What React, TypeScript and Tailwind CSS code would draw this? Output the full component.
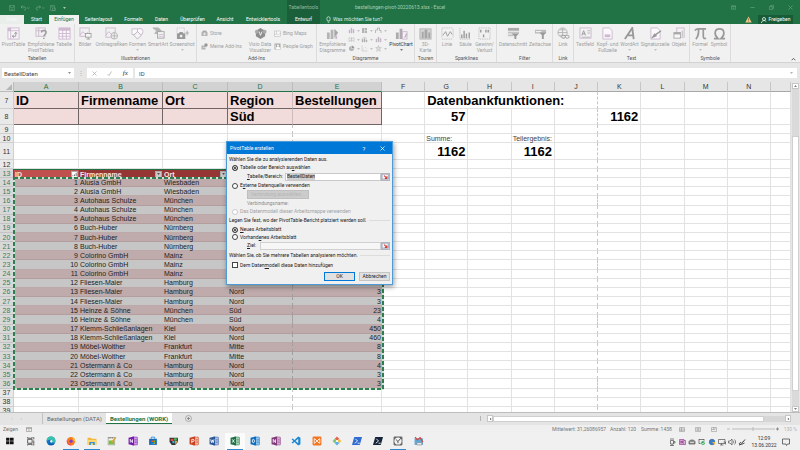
import React from 'react';

type Kids = { children?: React.ReactNode };

const G = '#b4b4b4';
const P = '#cdb9d0';

function Ico({ children, className = 'h-[13px] w-[13px]' }: Kids & { className?: string }) {
  return (
    <svg viewBox="0 0 14 14" className={`shrink-0 ${className}`} fill="none" stroke={G} strokeWidth="1" aria-hidden="true">
      {children}
    </svg>
  );
}

/* ---------- ribbon drawings ---------- */
const icons = {
  pivot: <><rect x="1" y="1" width="12" height="12" stroke={P} fill="#f8f5f8" /><path d="M1 4h12M4 1v12" stroke={P} /><rect x="1" y="1" width="3" height="3" fill={P} stroke="none" /><path d="M6 10h3.5V6M8 7.500L9.500 5.500L11 7.500M7.500 8.500L5.500 10L7.500 11.500" stroke="#9a9a9a" /></>,
  recommend: <><rect x="1" y="1" width="10" height="9" stroke={P} /><path d="M1 4h10M4 1v9" stroke={P} /><path d="M7 6c0-3 5-3 5 0c0 2-2.500 2-2.500 4M9.500 11.500v1.500" stroke="#999" strokeWidth="1.500" /></>,
  table: <><rect x="1" y="1" width="12" height="12" stroke={P} fill="#faf8fa" /><rect x="1" y="1" width="12" height="3" fill={P} stroke="none" /><path d="M1 7h12M1 10h12M5 1v12M9 1v12" stroke={P} /></>,
  picture: <><rect x="1" y="1" width="10" height="9" stroke={P} /><path d="M1 9l3-4l3 3l2-2l2 3" stroke={P} /><rect x="7" y="7" width="6" height="4" fill="#f5f5f5" stroke="#a3a3a3" /><path d="M10 11v2M8 13h4" stroke="#a3a3a3" /></>,
  online: <><rect x="1" y="1" width="10" height="10" stroke={P} /><path d="M1 9l3-4l3 3l4-3" stroke={P} /><circle cx="10" cy="9.500" r="3.500" fill="#f1f1f1" /><path d="M6.500 9.500h7M10 6v7" /></>,
  shapes: <><circle cx="9.500" cy="5" r="3.500" stroke={P} fill="#faf8fa" /><path d="M1 2h6v6H1z" stroke={P} fill="#faf8fa" /><path d="M3 9l4-4l4 4l-4 4z" fill="#f5f5f5" stroke="#b8b0ba" /></>,
  smart: <><path d="M1 1h6l3 3l-3 3H3l2-3z" fill={G} /><rect x="6" y="5" width="7" height="7" fill="#f7f7f7" stroke="#a3a3a3" /><path d="M7 8h5M7 10h5" stroke={P} /></>,
  shot: <><rect x="1" y="1" width="8" height="6" strokeDasharray="1 1" stroke={P} /><path d="M1 7h2l1-1.500h3L8 7h2v6H1z" fill="#999" stroke="none" /><circle cx="5.500" cy="9.800" r="1.500" fill="#eee" stroke="none" /><path d="M12 4v5M10 6.500h4" stroke="#aaa" /></>,
  bag: <><path d="M1 4l6-2l6 2v8H1z" fill={G} stroke="none" /><path d="M4 4V2h6v2" stroke="#999" strokeWidth="1.500" /><path d="M7 5v6M4 8h6" stroke="#eee" strokeWidth="1.500" /></>,
  addins: <><rect x="1" y="5" width="8" height="8" fill={G} stroke="none" /><circle cx="10" cy="4" r="3.500" fill="#999" stroke="none" /><path d="M4 9h5" stroke="#eee" /></>,
  visio: <><path d="M2 4l5-3l5 3v6l-5 3l-5-3z" fill="#8e8e8e" stroke="none" /><circle cx="3" cy="5" r="2" fill="#aaa" stroke="none" /><circle cx="11.500" cy="5" r="2" fill="#aaa" stroke="none" /><path d="M5.500 5l1.500 4l1.500-4" stroke="#f1f1f1" /></>,
  map: <><rect x="1" y="2" width="12" height="11" fill="#f8f8f8" /><path d="M5 2v6l3 2l5-4M1 9l4-1" /></>,
  people: <><rect x="1" y="1" width="12" height="12" fill="#aaa" stroke="none" /><circle cx="8" cy="5" r="2" fill="#fff" stroke="none" /><path d="M4 12c0-6 8-6 8 0zM3 3v8" fill="#fff" stroke="#fff" /></>,
  chartRec: <><path d="M1 6h3v7H1zM5 3h3v10H5z" fill={G} stroke="none" /><path d="M9 2l4 4l-4 6z" fill="#a5a5a5" stroke="none" /><path d="M10 9h2v4h-2z" fill={P} stroke="none" /></>,
  bars: <path d="M2 6h2v6H2zM6 2h2v10H6zM10 5h2v7h-2z" fill={G} stroke={P} />,
  tree: <><rect x="2" y="2" width="10" height="10" fill={G} stroke="none" /><path d="M7 2v10M7 7h5" stroke="#f1f1f1" /></>,
  flow: <path d="M1 12V6h4V2h4v5h3v5" stroke="#a8a8a8" strokeWidth="1.500" />,
  radar: <path d="M2 3l5 3l5-3v8l-5-3l-5 3zM7 2v10" />,
  combo: <><path d="M2 7h2v5H2zM6 5h2v7H6zM10 8h2v4h-2z" fill="#a8a8a8" /><path d="M1 6l5-4l6 3" /></>,
  pie: <><circle cx="7" cy="7" r="5" fill={G} stroke="none" /><path d="M7 7V1a6 6 0 0 1 6 6z" fill="#8f8f8f" stroke="#f1f1f1" /></>,
  scatter: <><path d="M2 1v11h11" /><path d="M5 8h1M8 5h1M10 8h1" stroke={P} strokeWidth="2" /></>,
  star: <path d="M7 1l1.500 4h4l-3 3l1 5L7 10l-3.500 3l1-5l-3-3h4z" fill="#ddd" />,
  pivotChart: <><path d="M1 6h3v7H1zM5 2h3v11H5z" fill="#ababab" stroke="none" /><rect x="8" y="5" width="5" height="8" fill="#f5f0f5" stroke={P} /><path d="M10 11c2 0 2-2 2-4" stroke="#999" /></>,
  map3d: <><rect x="1" y="2" width="12" height="11" fill="#d4d4d4" stroke={G} /><path d="M3 5h2v7H3zM6 3h3v9H6zM10 6h2v6h-2z" fill="#a6a6a6" stroke="none" /></>,
  line: <><path d="M1 1h12M1 13h12M1 2v10M13 2v10" strokeDasharray="1 1" /><path d="M2 9l3-4l2 5l3-5l2 3" stroke="#999" /></>,
  column: <><path d="M1 1v12h12" strokeDasharray="1 1" /><path d="M3 12V8M5.500 12V4M8 12V7M11 12V6" stroke="#9c9c9c" strokeWidth="1.500" /></>,
  winloss: <><path d="M1 1h12v12H1z" strokeDasharray="1 1" /><path d="M3 3v3M6 8v3M8.500 3v3M11 3v3" stroke="#999" strokeWidth="1.500" /></>,
  slicer: <><path d="M1 1h12v3H1z" fill="#aaa" stroke="none" /><path d="M1 6h12M1 9h6" strokeWidth="2" stroke="#c4c4c4" /><path d="M5 7h8l-3 3v3H8v-3z" fill="#999" stroke="none" /></>,
  timeline: <><path d="M1 3h12v4H1z" fill="#bbb" stroke="none" /><path d="M2 5h6" stroke="#fff" /><path d="M6 6h7l-2.500 3v4h-2V9z" fill="#999" stroke="none" /></>,
  link: <><circle cx="6" cy="6" r="5" /><path d="M1 6h10M6 1v10M2.500 3h7M2.500 9h7" /><rect x="5" y="9" width="4" height="3" rx="1.500" fill="#f1f1f1" stroke="#999" /><rect x="9" y="9" width="4" height="3" rx="1.500" fill="#f1f1f1" stroke="#999" /></>,
  textbox: <><rect x="1" y="1" width="12" height="11" stroke={P} /><path d="M3 9l2-5l2 5M3.500 7.500h3" stroke="#999" /><path d="M9 4h3M9 6.500h3M3 11h9" /></>,
  headfoot: <><path d="M2 1h7l3 3v9H2z" stroke={P} fill="#faf8fa" /><rect x="4" y="8" width="6" height="3" fill={P} stroke="none" /></>,
  wordart: <path d="M2 13L10 1l1.500 12M5 9h6" stroke="#999" strokeWidth="2" />,
  sign: <><path d="M2 1h7l3 3v9H2z" stroke={P} fill="#faf8fa" /><path d="M6 9l7-5M4 11l2-3l1.500 1.500z" stroke="#999" strokeWidth="1.500" /></>,
  object: <><rect x="4" y="1" width="8" height="10" stroke={P} /><rect x="1" y="6" width="7" height="6" fill="#f8f8f8" stroke="#aaa" /><path d="M1 7h7" strokeWidth="2" stroke="#aaa" /><path d="M10 4v6" /></>,
  pi: <path d="M1 4c1-2 2-2 4-2h8M5 2c0 5 0 8-3 11M10 2v8c0 2 1 3 3 2" stroke="#999" strokeWidth="1.800" />,
  omega: <path d="M1 12.500h4.500C1 9 1 2 7 2s6 7 1.500 10.500H13" stroke="#999" strokeWidth="1.800" />,
};

function Big({ icon, lines, w, caret, dark }: { icon: React.ReactNode; lines: string[]; w: string; caret?: boolean; dark?: boolean }) {
  return (
    <button type="button" className={`flex shrink-0 flex-col items-center ${w}`}>
      <Ico>{icon}</Ico>
      <span className={`mt-px flex flex-col items-center whitespace-nowrap text-[5px] leading-[6px] ${dark ? 'text-[#333]' : 'text-[#a0a0a0]'}`}>
        {lines.map((l) => <span key={l}>{l}</span>)}
      </span>
      {caret && <Caret className={`mt-[2px] ${dark ? 'text-[#555]' : 'text-[#b5b5b5]'}`} />}
    </button>
  );
}

function Caret({ className = '' }: { className?: string }) {
  return (
    <svg viewBox="0 0 4 2" className={`h-[2px] w-[3px] shrink-0 ${className}`} aria-hidden="true">
      <path d="M0 0h4L2 2z" fill="currentColor" />
    </svg>
  );
}

function Small({ icon, label }: { icon: React.ReactNode; label: string }) {
  return (
    <button type="button" className="flex h-[13px] items-center gap-[2px] whitespace-nowrap text-[5px] text-[#a0a0a0]">
      <Ico className="h-[7px] w-[7px]">{icon}</Ico>
      {label}
    </button>
  );
}

function Group({ label, w, children }: Kids & { label: string; w: string }) {
  return (
    <section aria-label={label} className={`flex h-full shrink-0 flex-col border-r border-[#dcdcdc] ${w}`}>
      <div className="flex flex-1 pt-[3px]">{children}</div>
      <div className="h-[7px] whitespace-nowrap text-center text-[5px] leading-[7px] text-[#555]">{label}</div>
    </section>
  );
}

function TitleBar() {
  return (
    <div className="flex h-[15px] items-center">
      <div className="flex w-[287px] items-center gap-[5px] pl-[9px] text-[#6ba583]">
        <svg viewBox="0 0 12 12" className="h-[6px] w-[6px]" fill="none" stroke="currentColor"><path d="M1 1h10v10H1zM3 1v4h6V1M4 11V8h4v3" /></svg>
        <svg viewBox="0 0 18 12" className="h-[6px] w-[10px]" fill="none" stroke="currentColor" strokeWidth="1.500"><path d="M4 1L1 4l3 3M1 4h6c5 0 5 6 0 6M14 5l1.500 2L17 5" /></svg>
        <svg viewBox="0 0 18 12" className="h-[6px] w-[10px]" fill="none" stroke="currentColor" strokeWidth="1.500"><path d="M7 1l3 3l-3 3M10 4H5c-5 0-5 6 0 6M14 5l1.500 2L17 5" /></svg>
        <svg viewBox="0 0 12 12" className="h-[6px] w-[6px]" fill="none" stroke="currentColor"><path d="M1 1h8v10H1zM3 1v3h4M5 6h6v5H5z" /></svg>
        <Caret className="ml-[2px] text-[#d5e6db]" />
      </div>
      <div className="h-full w-[33px] bg-[#1b5e3a] text-center text-[5px] leading-[15px] text-[#8fbba0]">Tabellentools</div>
      <div className="flex-1 pl-[35px] text-[5px] text-[#a5cdb4]">bestellungen-pivot-20220613.xlsx - Excel</div>
      <div className="flex text-[#6ba583]">
        {['M1 2h10v8H1zM1 4h10M6 9V6', 'M1 6h10', 'M1 4h7v7H1zM4 4V1h7v7H8', 'M1 1l10 10M11 1L1 11'].map((d, i) => (
          <button key={d} type="button" aria-label={['Menüband', 'Minimieren', 'Wiederherstellen', 'Schließen'][i]} className="flex w-[19px] justify-center">
            <svg viewBox="0 0 12 12" className="h-[5px] w-[5px]" fill="none" stroke="currentColor" strokeWidth="1.500"><path d={d} /></svg>
          </button>
        ))}
      </div>
    </div>
  );
}

function RibbonTabs() {
  const tabs: [string, string][] = [
    ['Datei', 'w-[24px] bg-[#e9eeeb] text-[#f8f8f8]'], ['Start', 'w-[25px]'], ['Einfügen', 'w-[30px] bg-[#f1f1f1] text-[#217346]'],
    ['Seitenlayout', 'w-[39px]'], ['Formeln', 'w-[31px]'], ['Daten', 'w-[25px]'], ['Überprüfen', 'w-[37px]'],
    ['Ansicht', 'w-[28px]'], ['Entwicklertools', 'w-[48px]'], ['Entwurf', 'w-[33px] bg-[#1b5e3a]'],
  ];
  return (
    <nav className="flex h-[9px] items-stretch text-[5px] leading-[9px] text-white">
      {tabs.map(([t, c]) => <button key={t} type="button" className={`shrink-0 text-center ${c}`}>{t}</button>)}
      <button type="button" className="ml-[6px] flex items-center gap-[2px] whitespace-nowrap text-[#d8ebe0]">
        <svg viewBox="0 0 10 14" className="h-[7px] w-[5px]" fill="none" stroke="currentColor" strokeWidth="1.500"><path d="M3 10C1 6 1 1.500 5 1.500S9 6 7 10zM3.500 12.500h3" /></svg>
        Was möchten Sie tun?
      </button>
      <div className="flex-1" />
      <svg viewBox="0 0 12 12" className="mr-[6px] h-[7px] w-[7px] self-center"><path d="M6 1l5.500 10H.5z" fill="#f4c58a" /><path d="M6 4v4M6 9v1" stroke="#7a4a10" /></svg>
      <button type="button" className="mr-[7px] flex w-[35px] items-center justify-center gap-[2px] bg-[#185c37] text-white">
        <svg viewBox="0 0 12 12" className="h-[6px] w-[6px]" fill="none" stroke="currentColor" strokeWidth="1.500"><circle cx="6" cy="4" r="3" /><path d="M1 12c0-6 8-6 9-3" /></svg>
        Freigeben
      </button>
    </nav>
  );
}

function Ribbon() {
  const mini = [icons.bars, icons.tree, icons.flow, icons.radar, icons.combo, icons.bars, icons.pie, icons.scatter, icons.star];
  return (
    <div className="flex h-[39px] shrink-0 border-b border-[#d2d2d2] bg-[#f1f1f1]">
      <Group label="Tabellen" w="w-[75px]">
        <Big icon={icons.pivot} lines={['PivotTable']} w="w-[27px]" />
        <Big icon={icons.recommend} lines={['Empfohlene', 'PivotTables']} w="w-[28px]" />
        <Big icon={icons.table} lines={['Tabelle']} w="w-[18px]" />
      </Group>
      <Group label="Illustrationen" w="w-[122px]">
        <Big icon={icons.picture} lines={['Bilder']} w="w-[20px]" />
        <Big icon={icons.online} lines={['Onlinegrafiken']} w="w-[33px]" />
        <Big icon={icons.shapes} lines={['Formen']} w="w-[19px]" caret />
        <Big icon={icons.smart} lines={['SmartArt']} w="w-[22px]" />
        <Big icon={icons.shot} lines={['Screenshot']} w="w-[26px]" caret />
      </Group>
      <Group label="Add-Ins" w="w-[120px]">
        <div className="w-[49px] pl-[4px]">
          <Small icon={icons.bag} label="Store" />
          <Small icon={icons.addins} label="Meine Add-Ins" />
        </div>
        <Big icon={icons.visio} lines={['Visio Data', 'Visualizer']} w="w-[28px]" />
        <div className="w-[42px]">
          <Small icon={icons.map} label="Bing Maps" />
          <Small icon={icons.people} label="People Graph" />
        </div>
      </Group>
      <Group label="Diagramme" w="w-[98px]">
        <Big icon={icons.chartRec} lines={['Empfohlene', 'Diagramme']} w="w-[31px]" />
        <div className="grid w-[40px] grid-cols-3 content-start gap-y-[2px]">
          {mini.map((m, i) => (
            <button key={i} type="button" aria-label={`Diagrammtyp ${i + 1}`} className="flex h-[7px] items-center gap-[2px]">
              <Ico className="h-[7px] w-[7px]">{m}</Ico>
              <Caret className="text-[#b5b5b5]" />
            </button>
          ))}
        </div>
        <Big icon={icons.pivotChart} lines={['PivotChart']} w="w-[26px]" caret dark />
      </Group>
      <Group label="Touren" w="w-[22px]">
        <Big icon={icons.map3d} lines={['3D-', 'Karte']} w="w-[21px]" />
      </Group>
      <Group label="Sparklines" w="w-[60px]">
        <Big icon={icons.line} lines={['Linie']} w="w-[20px]" />
        <Big icon={icons.column} lines={['Säule']} w="w-[17px]" />
        <Big icon={icons.winloss} lines={['Gewinn/', 'Verlust']} w="w-[21px]" />
      </Group>
      <Group label="Filter" w="w-[56px]">
        <Big icon={icons.slicer} lines={['Datenschnitt']} w="w-[32px]" />
        <Big icon={icons.timeline} lines={['Zeitachse']} w="w-[22px]" />
      </Group>
      <Group label="Link" w="w-[21px]">
        <Big icon={icons.link} lines={['Link']} w="w-[20px]" />
      </Group>
      <Group label="Text" w="w-[116px]">
        <Big icon={icons.textbox} lines={['Textfeld']} w="w-[22px]" />
        <Big icon={icons.headfoot} lines={['Kopf- und', 'Fußzeile']} w="w-[23px]" />
        <Big icon={icons.wordart} lines={['WordArt']} w="w-[21px]" caret />
        <Big icon={icons.sign} lines={['Signaturzeile']} w="w-[30px]" caret />
        <Big icon={icons.object} lines={['Objekt']} w="w-[18px]" />
      </Group>
      <Group label="Symbole" w="w-[41px]">
        <Big icon={icons.pi} lines={['Formel']} w="w-[20px]" caret />
        <Big icon={icons.omega} lines={['Symbol']} w="w-[18px]" />
      </Group>
      <div className="flex flex-1 items-end justify-end pb-[1px] pr-[4px]">
        <button type="button" aria-label="Menüband reduzieren">
          <svg viewBox="0 0 8 6" className="h-[4px] w-[5px]" fill="none" stroke="#555" strokeWidth="1.500"><path d="M1 5l3-3l3 3" /></svg>
        </button>
      </div>
    </div>
  );
}

function FormulaBar() {
  return (
    <div className="flex h-[19px] shrink-0 items-start bg-[#e6e6e6] pl-[2px] pr-[3px] pt-[5px] text-[6px] text-[#444]">
      <div className="flex h-[10px] w-[72px] items-center bg-white pl-[2px] pr-[3px]">
        <input aria-label="Namenfeld" defaultValue="BestellDaten" className="w-full min-w-0 bg-transparent outline-none" />
        <Caret className="text-[#666]" />
      </div>
      <span className="w-[13px] text-center leading-[10px] text-[#aaa]">⋮</span>
      <div className="flex h-[10px] w-[46px] items-center justify-around bg-white">
        <svg viewBox="0 0 10 10" className="h-[5px] w-[5px]" stroke="#aaa" strokeWidth="1.500"><path d="M1 1l8 8M9 1L1 9" /></svg>
        <svg viewBox="0 0 10 10" className="h-[5px] w-[5px]" fill="none" stroke="#aaa" strokeWidth="1.500"><path d="M1 6l3 3l5-8" /></svg>
        <span className="font-['Liberation_Serif',serif] text-[7px] italic leading-none text-[#333]">fx</span>
      </div>
      <div className="ml-[2px] flex h-[10px] flex-1 items-center bg-white px-[4px]">
        <input aria-label="Bearbeitungsleiste" defaultValue="ID" className="w-full bg-transparent outline-none" />
        <Caret className="text-[#999]" />
      </div>
    </div>
  );
}

/* ---------- worksheet ---------- */
const COLS = 'grid grid-cols-[14px_65px_84px_65px_65px_89px_repeat(9,minmax(0,1fr))_20px]';
const LETTERS = ['A', 'B', 'C', 'D', 'E', 'F', 'G', 'H', 'I', 'J', 'K', 'L', 'M', 'N', ''];
const LINE = 'border-b border-r border-[#e2e2e2]';

type Cell = { t: string; c: string };
const BIG = 'px-[2px] text-[13px] font-bold';
const topRows: { n: number; h: string; pink?: boolean; cells: Record<number, Cell> }[] = [
  {
    n: 7, h: 'h-[17px]', pink: true,
    cells: {
      0: { t: 'ID', c: BIG }, 1: { t: 'Firmenname', c: BIG }, 2: { t: 'Ort', c: BIG },
      3: { t: 'Region', c: BIG }, 4: { t: 'Bestellungen', c: BIG }, 6: { t: 'Datenbankfunktionen:', c: BIG },
    },
  },
  { n: 8, h: 'h-[16px]', pink: true, cells: { 3: { t: 'Süd', c: BIG }, 6: { t: '57', c: `${BIG} justify-end` }, 10: { t: '1162', c: `${BIG} justify-end` } } },
  { n: 9, h: 'h-[9px]', cells: {} },
  { n: 10, h: 'h-[9px]', cells: { 6: { t: 'Summe:', c: 'px-px text-[7px] text-[#444]' }, 8: { t: 'Teilergebnis:', c: 'px-px text-[7px] text-[#444]' } } },
  { n: 11, h: 'h-[17px]', cells: { 6: { t: '1162', c: `${BIG} justify-end` }, 8: { t: '1162', c: `${BIG} justify-end` } } },
  { n: 12, h: 'h-[9px]', cells: {} },
];

const orders: [string, string, string, string][] = [
  ['Alusia GmbH', 'Wiesbaden', '', ''], ['Alusia GmbH', 'Wiesbaden', '', ''],
  ['Autohaus Schulze', 'München', '', ''], ['Autohaus Schulze', 'München', '', ''], ['Autohaus Schulze', 'München', '', ''],
  ['Buch-Huber', 'Nürnberg', '', ''], ['Buch-Huber', 'Nürnberg', '', ''], ['Buch-Huber', 'Nürnberg', '', ''],
  ['Colorino GmbH', 'Mainz', '', ''], ['Colorino GmbH', 'Mainz', '', ''], ['Colorino GmbH', 'Mainz', '', ''],
  ['Fliesen-Maier', 'Hamburg', 'Nord', '3'], ['Fliesen-Maier', 'Hamburg', 'Nord', '3'], ['Fliesen-Maier', 'Hamburg', 'Nord', '3'],
  ['Heinze & Söhne', 'München', 'Süd', '23'], ['Heinze & Söhne', 'München', 'Süd', '4'],
  ['Klemm-Schließanlagen', 'Kiel', 'Nord', '450'], ['Klemm-Schließanlagen', 'Kiel', 'Nord', '460'],
  ['Möbel-Wolther', 'Frankfurt', 'Mitte', '8'], ['Möbel-Wolther', 'Frankfurt', 'Mitte', '8'],
  ['Ostermann & Co', 'Hamburg', 'Nord', '4'], ['Ostermann & Co', 'Hamburg', 'Nord', '3'], ['Ostermann & Co', 'Hamburg', 'Nord', '3'],
];

function RowHead({ n, sel }: { n: number; sel?: boolean }) {
  return (
    <th scope="row" className={`flex items-center justify-center border-b border-r text-[7px] font-normal leading-none ${sel ? 'border-[#c4c4c4] border-r-[#217346] bg-[#d8d8d8] text-[#3d7d59]' : 'border-[#cfcfcf] bg-[#e9e9e9] text-[#333]'}`}>{n}</th>
  );
}

function breakLine(i: number) {
  return i === 3 || i === 9 ? 'border-b border-r border-b-[#e2e2e2] border-r-[#c6c6c6] [border-right-style:dashed]' : LINE;
}

function Blank({ from }: { from: number }) {
  return <>{LETTERS.slice(from).map((_, i) => <td key={i} className={breakLine(i + from)} />)}</>;
}

function FilterButton({ name, sorted }: { name: string; sorted?: boolean }) {
  return (
    <button type="button" aria-label={`${name} filtern`} className={`ml-auto flex h-[7px] w-[7px] items-center justify-center border border-[#aaa] ${sorted ? 'bg-white' : 'bg-[#c8c8c8]'}`}>
      {sorted
        ? <svg viewBox="0 0 6 6" className="h-[5px] w-[5px]" stroke="#555" strokeWidth="1"><path d="M1 5V4M3 5V3M5 5V1" /></svg>
        : <Caret className="text-[#333]" />}
    </button>
  );
}

function Sheet() {
  return (
    <div className="relative min-w-0 flex-1 overflow-hidden bg-white font-['Liberation_Sans',Arial,sans-serif]">
      <table className="block w-full">
        <thead className="block">
          <tr className={`${COLS} h-[10px]`}>
            <th className="flex items-end justify-end border-b border-r border-[#bbb] bg-[#e6e6e6] p-px">
              <svg viewBox="0 0 6 6" className="h-[6px] w-[6px]"><path d="M6 0v6H0z" fill="#b5b5b5" /></svg>
            </th>
            {LETTERS.map((l, i) => (
              <th key={i} scope="col" className={`flex items-center justify-center border-b border-r text-[7px] font-normal leading-none ${i < 5 ? 'border-b-[#217346] border-r-[#bdbdbd] bg-[#d2d2d2] text-[#217346]' : 'border-b-[#a8a8a8] border-r-[#c6c6c6] bg-[#e6e6e6] text-[#333]'}`}>{l}</th>
            ))}
          </tr>
        </thead>
        <tbody className="block text-black">
          {topRows.map((r) => (
            <tr key={r.n} className={`${COLS} ${r.h}`}>
              <RowHead n={r.n} />
              {LETTERS.map((_, i) => {
                const cell = r.cells[i];
                const open = r.n === 7 && (i === 6 || i === 7 || i === 8);
                return (
                  <td key={i} className={`flex min-w-0 items-center whitespace-nowrap leading-none ${r.pink && i < 5 ? `border-b border-[#6f6565] bg-[#f2dcdb] ${i === 3 ? 'border-r border-r-[#cdbcbb]' : 'border-r'}` : open ? 'border-b border-[#e2e2e2]' : breakLine(i)} ${cell ? cell.c : ''}`}>
                    {cell?.t}
                  </td>
                );
              })}
            </tr>
          ))}
        </tbody>
        <tbody className="grid h-[247px] auto-rows-fr text-[7px] text-[#222]">
          <tr className={`${COLS} min-h-0`}>
            <RowHead n={13} sel />
            {['ID', 'Firmenname', 'Ort', '', ''].map((t, i) => (
              <td key={i} className={`flex items-center border-t border-[#217346] px-[1px] font-bold leading-none text-[#f6e4e3] ${i === 0 ? 'bg-[#c0504d]' : 'bg-[#963634]'}`}>
                {t}{t && <FilterButton name={t} sorted={i === 0} />}
              </td>
            ))}
            <Blank from={5} />
          </tr>
          {orders.map(([firm, city, region, count], k) => {
            const bg = k % 2 === 0 ? 'bg-[#bfabab] border-[#b39d9d]' : 'bg-[#c6c6c6] border-[#bda9a9]';
            const base = `flex min-w-0 items-center whitespace-nowrap border-b px-px leading-none ${bg}`;
            return (
              <tr key={k} className={`${COLS} min-h-0`}>
                <RowHead n={14 + k} sel />
                <td className={`${base} justify-end`}>{k + 1}</td>
                <td className={base}>{firm}</td>
                <td className={base}>{city}</td>
                <td className={`${base} border-r border-r-[#a39c9c] [border-right-style:dashed]`}>{region}</td>
                <td className={`${base} justify-end`}>{count}</td>
                <Blank from={5} />
              </tr>
            );
          })}
          {[37, 38, 39].map((n) => (
            <tr key={n} className={`${COLS} min-h-0`}>
              <RowHead n={n} />
              <Blank from={0} />
            </tr>
          ))}
        </tbody>
      </table>
      {/* marching ants round the copied range */}
      <svg className="pointer-events-none absolute left-[13px] top-[95px] h-[213px] w-[371px]" aria-hidden="true">
        <rect x="1" y="1" width="369" height="211" fill="none" stroke="#cfe3d6" strokeWidth="2" />
        <rect x="1" y="1" width="369" height="211" fill="none" stroke="#2f7d50" strokeWidth="2" strokeDasharray="4 2" />
      </svg>
    </div>
  );
}

function VerticalScroll() {
  const b = 'flex h-[6px] shrink-0 items-center justify-center border border-[#c6c6c6] bg-white';
  return (
    <div className="flex w-[9px] shrink-0 flex-col bg-[#e6e6e6] px-px pt-px">
      <button type="button" aria-label="Nach oben" className={b}><Caret className="rotate-180 text-[#555]" /></button>
      <div className="h-[47px] bg-[#dadada]" />
      <div className="flex-1 border border-[#cfcfcf] bg-white" />
      <div className="h-[15px] bg-[#dadada]" />
      <button type="button" aria-label="Nach unten" className={b}><Caret className="text-[#555]" /></button>
    </div>
  );
}

/* ---------- dialog ---------- */
function Radio({ label, h, on, off, name }: { label: React.ReactNode; h: string; on?: boolean; off?: boolean; name: string }) {
  return (
    <label className={`flex items-center gap-[2px] pl-[3px] ${h} ${off ? 'text-[#a0a0a0]' : ''}`}>
      <input
        type="radio" name={name} defaultChecked={on} disabled={off}
        className={`h-[6px] w-[6px] shrink-0 appearance-none rounded-full border bg-white checked:bg-[#222] checked:shadow-[inset_0_0_0_1px_white] ${off ? 'border-[#ccc]' : 'border-[#444]'}`}
      />
      <span>{label}</span>
    </label>
  );
}

function RefButton({ label }: { label: string }) {
  return (
    <button type="button" aria-label={label} className="flex h-[8px] w-[9px] shrink-0 items-center justify-center border border-[#b5b5b5] bg-[#dce3ee]">
      <svg viewBox="0 0 10 8" className="h-[6px] w-[7px]"><path d="M0 0h9v7H0z" fill="#f4f6fa" stroke="#8292b5" /><path d="M3 2l4 4M7 3v3H4" stroke="#d23b32" strokeWidth="1.500" fill="none" /></svg>
    </button>
  );
}

function Rule({ children }: Kids) {
  return (
    <div className="flex h-[11px] items-center gap-[2px] whitespace-nowrap">
      <span>{children}</span>
      <span className="h-px flex-1 bg-[#dcdcdc]" />
    </div>
  );
}

function PivotDialog() {
  return (
    <div role="dialog" aria-labelledby="dlg-title" className="absolute left-[226px] top-[141px] w-[167px] border border-[#4f9bd8] bg-[#f0f0f0] text-[5px] leading-[7px] text-[#222] shadow-[1px_2px_5px_rgba(0,0,0,0.4)]">
      <div className="flex h-[12px] items-center bg-[#0078d7] pl-[3px] text-white">
        <h2 id="dlg-title" className="flex-1">PivotTable erstellen</h2>
        <button type="button" className="w-[18px] text-center text-[6px]">?</button>
        <button type="button" aria-label="Schließen" className="flex w-[19px] justify-center">
          <svg viewBox="0 0 10 10" className="h-[5px] w-[5px]" stroke="white" strokeWidth="1.500"><path d="M1 1l8 8M9 1L1 9" /></svg>
        </button>
      </div>
      <div className="flex flex-col px-[2px] pb-[3px] pt-px">
        <p className="h-[8px] leading-[9px]">Wählen Sie die zu analysierenden Daten aus.</p>
        <Radio name="source" on h="h-[9px]" label={<>Tabelle oder Bereich au<u>s</u>wählen</>} />
        <div className="flex h-[9px] items-center pl-[18px]">
          <label htmlFor="range" className="w-[38px]"><u>T</u>abelle/Bereich:</label>
          <div className="flex h-[8px] min-w-0 flex-1 items-center border border-[#c8c8c8] bg-white pl-px">
            <input id="range" defaultValue="BestellDaten" className="h-[6px] w-[28px] bg-[#cfcfcf] text-[5px] outline-none" />
          </div>
          <RefButton label="Bereich auswählen" />
        </div>
        <Radio name="source" h="h-[9px]" label={<>E<u>x</u>terne Datenquelle verwenden</>} />
        <button type="button" disabled className="ml-[18px] h-[9px] w-[62px] border border-[#bfbfbf] bg-[#cccccc] text-[#b5b5b5]">Verbindung auswählen...</button>
        <p className="h-[9px] pl-[18px] leading-[9px] text-[#8c8c8c]">Verbindungsname:</p>
        <Radio name="source" off h="h-[7px]" label="Das Datenmodell dieser Arbeitsmappe verwenden" />
        <Rule>Legen Sie fest, wo der PivotTable-Bericht platziert werden soll.</Rule>
        <Radio name="target" on h="h-[7px]" label={<><u>N</u>eues Arbeitsblatt</>} />
        <Radio name="target" h="h-[8px]" label={<>Vorhand<u>e</u>nes Arbeitsblatt</>} />
        <div className="flex h-[9px] items-center pl-[18px]">
          <label htmlFor="dest" className="w-[13px]"><u>Z</u>iel:</label>
          <input id="dest" className="h-[8px] min-w-0 flex-1 border border-[#d0d0d0] bg-[#f6f6f6]" />
          <RefButton label="Ziel auswählen" />
        </div>
        <Rule>Wählen Sie, ob Sie mehrere Tabellen analysieren möchten.</Rule>
        <label className="flex h-[8px] items-center gap-[2px] pl-[3px]">
          <input type="checkbox" className="h-[6px] w-[6px] appearance-none border border-[#444] bg-white" />
          <span>Dem Daten<u>m</u>odell diese Daten hinzufügen</span>
        </label>
        <div className="mt-[3px] flex justify-end gap-[4px]">
          <button type="button" className="h-[9px] w-[31px] border border-[#0078d7] bg-[#e1e1e1]">OK</button>
          <button type="button" className="h-[9px] w-[31px] border border-[#c4c4c4] bg-[#e1e1e1]">Abbrechen</button>
        </div>
      </div>
    </div>
  );
}

/* ---------- bottom ---------- */
function SheetTabs() {
  return (
    <div className="flex h-[13px] shrink-0 items-start border-t border-[#bdbdbd] bg-[#e4e4e4] text-[5px] text-[#666]">
      <div className="flex h-[11px] w-[43px] items-center gap-[8px] border-r border-[#c2c2c2] pl-[11px] text-[#b5b5b5]"><span>‹</span><span>›</span></div>
      <button type="button" className="h-[11px] w-[63px] text-[6px] leading-[11px]">Bestellungen (DATA)</button>
      <button type="button" className="h-[11px] w-[66px] border-b border-[#217346] bg-white text-[6px] font-bold leading-[11px] text-[#217346]">Bestellungen (WORK)</button>
      <button type="button" aria-label="Neues Blatt" className="ml-[13px] mt-[2px]">
        <svg viewBox="0 0 14 14" className="h-[7px] w-[7px]" fill="none" stroke="#777"><circle cx="7" cy="7" r="6" /><path d="M7 4v6M4 7h6" strokeWidth="1.500" /></svg>
      </button>
      <div className="flex-1" />
      <div className="flex w-[311px] items-center pt-[2px]">
        <span className="mr-[6px] h-[5px] w-px bg-[#b5b5b5]" />
        <button type="button" aria-label="Nach links" className="flex h-[7px] w-[6px] items-center justify-center border border-[#c6c6c6] bg-white"><Caret className="rotate-90 text-[#555]" /></button>
        <div className="h-[6px] flex-1 border border-[#cfcfcf] bg-white" />
        <div className="h-[6px] w-[21px] bg-[#d6d6d6]" />
        <button type="button" aria-label="Nach rechts" className="flex h-[7px] w-[6px] items-center justify-center border border-[#c6c6c6] bg-white"><Caret className="-rotate-90 text-[#555]" /></button>
      </div>
      <div className="w-[9px]" />
    </div>
  );
}

function StatusBar() {
  const v = ['M1 1h10v8H1zM1 4h10M1 6.500h10M5 1v8', 'M1 1h10v8H1zM3 3h6M3 5h6M3 7h6', 'M1 1h10v8H1zM5 1v4M8 1v4H1'];
  return (
    <div className="flex h-[8px] shrink-0 items-center bg-[#efefef] px-[3px] text-[5px] leading-[8px] text-[#777]">
      <span>Zeigen</span>
      <svg viewBox="0 0 12 10" className="ml-[8px] h-[5px] w-[6px]" fill="none" stroke="#777"><path d="M1 1h10v8H1zM1 3h10M4 6h4" /></svg>
      <div className="flex-1" />
      <span className="w-[58px]">Mittelwert: 31,26086957</span>
      <span className="w-[31px]">Anzahl: 120</span>
      <span className="w-[38px]">Summe: 1438</span>
      {v.map((d) => (
        <svg key={d} viewBox="0 0 12 10" className="mr-[10px] h-[5px] w-[6px]" fill="none" stroke="#888"><path d={d} /></svg>
      ))}
      <svg viewBox="0 0 52 6" className="h-[6px] w-[52px]" stroke="#bbb"><path d="M0 3h3M5 3h43M26 1v4" /><path d="M49 3h3M50.500 1.500v3" stroke="#888" /></svg>
      <span className="w-[18px] text-right text-[#b5b5b5]">130 %</span>
    </div>
  );
}

function office(c: string, light: string, glyph: React.ReactNode) {
  return <><rect x="7" y="2" width="10" height="14" rx="1" fill={light} stroke={c} strokeWidth="1" /><path d="M12 6h4M12 9h4M12 12h4" stroke={c} /><path d="M1 3l10-2v16L1 15z" fill={c} /><g fill="none" stroke="#fff" strokeWidth="1.500">{glyph}</g></>;
}

const taskIcons: { n: string; d: React.ReactNode; run?: boolean; active?: boolean }[] = [
  { n: 'Start', d: <path d="M2 3h6v5.500H2zM9 3h6.500v5.500H9zM2 9.500h6V15H2zM9 9.500h6.500V15H9z" fill="#111" /> },
  { n: 'Aufgaben', d: <path d="M3 6h8v7H3zM3 2v2h8V2M3 17v-2h8v2M14 2v4M14 8v9" fill="none" stroke="#444" strokeWidth="1.500" /> },
  { n: 'Edge', d: <><circle cx="9" cy="9" r="8" fill="#1473c4" /><path d="M1 9a8 8 0 0 1 16 0c0 4-6 4-6 1c2-3-5-5-10-1z" fill="#39c3ae" /><path d="M7 9c-2 5 3 7 8 5c-5 5-12 1-8-5z" fill="#0c4f97" /><ellipse cx="9.500" cy="9.500" rx="2" ry="2.500" fill="#efefef" /></> },
  { n: 'Firefox', run: true, d: <><circle cx="9" cy="9.500" r="7.500" fill="#ff7a1a" /><path d="M2 6c0 7 4 10 9 10c-5 3-12-3-9-10z" fill="#f8326b" /><circle cx="9" cy="9.500" r="3" fill="#7b3fd0" /><path d="M11 1c5 3 6 7 5 10c-1-3-4-4-5-10z" fill="#ffc93a" /></> },
  { n: 'Explorer', run: true, d: <><path d="M1 3h6l2 2h8v11H1z" fill="#f3b73b" /><path d="M1 7h16v9H1z" fill="#ffd770" /><path d="M4 16v-5h10v5h-3v-3H7v3z" fill="#3a93d8" /></> },
  { n: 'Notepad++', d: <><rect x="2" y="3" width="12" height="13" fill="#f4f4e8" stroke="#888" /><path d="M3 8h10v7H3z" fill="#79bf3d" /><path d="M7 11l8-9l2 1l-7 9z" fill="#d9a23a" /><path d="M4 2v3M7 2v3M10 2v3" stroke="#555" /></> },
  { n: 'OneNote', d: office('#7719aa', '#d8a8ee', <path d="M4 12V6l4 6V6" />) },
  { n: 'Store', d: <><path d="M2 5h14v11H2z" fill="#1769b8" /><path d="M6 5V2h6v3" fill="none" stroke="#1d8fdb" strokeWidth="1.500" /><path d="M6 8h3v3H6z" fill="#f25022" /><path d="M10 8h3v3h-3z" fill="#7fba00" /><path d="M6 12h3v2H6z" fill="#00a4ef" /><path d="M10 12h3v2h-3z" fill="#ffb900" /></> },
  { n: 'Farben', d: <><path d="M1 3h15v8l-5 5H5L1 11z" fill="#333" /><path d="M3 5h5v4H3z" fill="#e44" /><path d="M9 4h5v4H9z" fill="#4b5" /><path d="M6 9h4v4H6z" fill="#4ac" /><path d="M11 8l5 2l-5 5z" fill="#d9b24d" /></> },
  { n: 'PowerPoint', d: office('#c9411f', '#f6c1ae', <path d="M5 13V6h2c3 0 3 4 0 4H5" />) },
  { n: 'Word', d: office('#2b579a', '#b8cdf0', <path d="M3 6l1.500 6L6 7l1.500 5L9 6" />) },
  { n: 'Excel', run: true, active: true, d: office('#1e7145', '#b7dfc6', <path d="M4 6l4 6M8 6l-4 6" />) },
  { n: 'Outlook', d: office('#0f6cbd', '#9fd0f5', <ellipse cx="6" cy="9" rx="2" ry="3" />) },
  { n: 'OneNote 2016', d: office('#80397b', '#e0b9dd', <path d="M4 12V6l4 6V6" />) },
  { n: 'VS Code', d: <path d="M13 1l4 2v12l-4 2L1 6l2-1.500L13 13V5L3 13.500L1 12z" fill="#1c86d1" /> },
  { n: 'XAMPP', d: <><rect x="1" y="1" width="16" height="16" rx="2" fill="#f37623" /><path d="M5 5l8 8M13 5l-8 8M5 5H4v8h1M13 5h1v8h-1" stroke="#fff" strokeWidth="1.500" fill="none" /></> },
  { n: 'Git', d: <><path d="M9 1l4 4l-4 4l-4-4z" fill="#e8634f" /><path d="M13 5l4 4l-4 4l-4-4z" fill="#f2c14e" /><path d="M9 9l4 4l-4 4l-4-4z" fill="#5fb0e8" /><path d="M5 5l4 4l-4 4l-4-4z" fill="#7cc576" /><circle cx="9" cy="9" r="2" fill="#fff" /></> },
  { n: 'PowerShell', d: <><path d="M4 2h14l-4 14H0z" fill="#2f6bd0" /><path d="M6 5l4 4l-5 4M10 13h4" stroke="#fff" strokeWidth="1.500" fill="none" /></> },
  { n: 'PowerShell 7', d: <><path d="M4 2h14l-4 14H0z" fill="#15243a" /><path d="M6 5l4 4l-5 4M10 13h4" stroke="#fff" strokeWidth="1.500" fill="none" /></> },
  { n: 'Uhr', run: true, d: <><rect x="1" y="1" width="16" height="16" rx="2" fill="#666" /><circle cx="9" cy="9" r="6.500" fill="#f2f2f2" /><path d="M5 6l4 4l5-6M9 10v3" stroke="#333" strokeWidth="1.500" fill="none" /></> },
  { n: 'Monitor', d: <><rect x="1" y="4" width="15" height="12" fill="#5fa8d8" /><path d="M2 2l4 5l5-4l5 8" stroke="#d2463c" strokeWidth="2" fill="none" /><path d="M5 12h9v4H5z" fill="#f3f3f3" stroke="#777" /></> },
];

const tray: React.ReactNode[] = [
  <path d="M5 5h6v7H5zM4 2h8M8 12v3M4 15h8M11 7h3v3h-3" stroke="#444" />,
  <><path d="M3 3h9v10H3z" fill="#d59ad3" stroke="#9b3d97" /><path d="M6 10V6l3 4V6M12 5h3v8h-3" stroke="#80397b" /></>,
  <><path d="M2 7c2-4 10-4 12 0v5H2z" fill="#999" stroke="#444" /><path d="M4 9h8" stroke="#eee" /></>,
  <><rect x="2" y="3" width="10" height="8" stroke="#444" /><circle cx="10" cy="10" r="4.500" fill="#28a35a" stroke="#fff" /><path d="M8 10l2 2l3-4" stroke="#fff" /></>,
  <><circle cx="8" cy="8" r="5.500" fill="#3b7ec9" stroke="#2b5f9e" /><path d="M8 8h6v6z" fill="#f0b43c" stroke="none" /></>,
  <><path d="M1 3h13v8H1zM7 11v3M4 14h7" stroke="#444" /><path d="M11 8h4v5" stroke="#444" /></>,
  <path d="M1 6h3l4-4v12l-4-4H1zM10 5c2 2 2 4 0 6M13 3c3 3 3 7 0 10" stroke="#444" />,
  <path d="M2 14c5 0 4-5 8-6l4-5M6 9c-4 0-4 4-1 4s7-3 8-3" stroke="#333" strokeWidth="1.800" />,
];

function Taskbar() {
  return (
    <footer className="flex h-[17px] shrink-0 items-stretch bg-[#f0f0f0]">
      <div className="grid w-[429px] shrink-0 auto-cols-fr grid-flow-col">
        {taskIcons.map((t) => (
          <button key={t.n} type="button" aria-label={t.n} className={`flex flex-col items-center ${t.active ? 'bg-[#fbfbfb]' : ''}`}>
            <span className="flex flex-1 items-center">
              <svg viewBox="0 0 18 18" className="h-[10px] w-[10px]" aria-hidden="true">{t.d}</svg>
            </span>
            <span className={`h-px w-[16px] ${t.run ? 'bg-[#2f86cf]' : ''}`} />
          </button>
        ))}
      </div>
      <div className="flex-1" />
      <div className="flex items-center gap-[2px] pr-[6px]">
        {tray.map((d, i) => <svg key={i} viewBox="0 0 16 16" className="h-[8px] w-[8px]" fill="none" strokeWidth="1.300" aria-hidden="true">{d}</svg>)}
      </div>
      <div className="flex w-[24px] flex-col items-center justify-center whitespace-nowrap text-[5px] leading-[7px] text-[#333]">
        <span>12:09</span>
        <span>13.06.2022</span>
      </div>
      <button type="button" aria-label="Benachrichtigungen" className="ml-[6px] mr-[10px] flex items-center">
        <svg viewBox="0 0 16 16" className="h-[8px] w-[8px]" fill="none" stroke="#444" strokeWidth="1.500"><path d="M1 2h14v10h-4l-2 3l-1-3H1z" /></svg>
      </button>
    </footer>
  );
}

export default function App() {
  return (
    <div className="relative flex h-screen w-full flex-col overflow-hidden bg-[#e6e6e6] font-[Roboto,'Open_Sans',sans-serif]">
      <header className="shrink-0 bg-[#217346]">
        <TitleBar />
        <RibbonTabs />
      </header>
      <Ribbon />
      <FormulaBar />
      <main className="flex min-h-0 flex-1">
        <Sheet />
        <VerticalScroll />
      </main>
      <SheetTabs />
      <StatusBar />
      <Taskbar />
      <PivotDialog />
    </div>
  );
}
